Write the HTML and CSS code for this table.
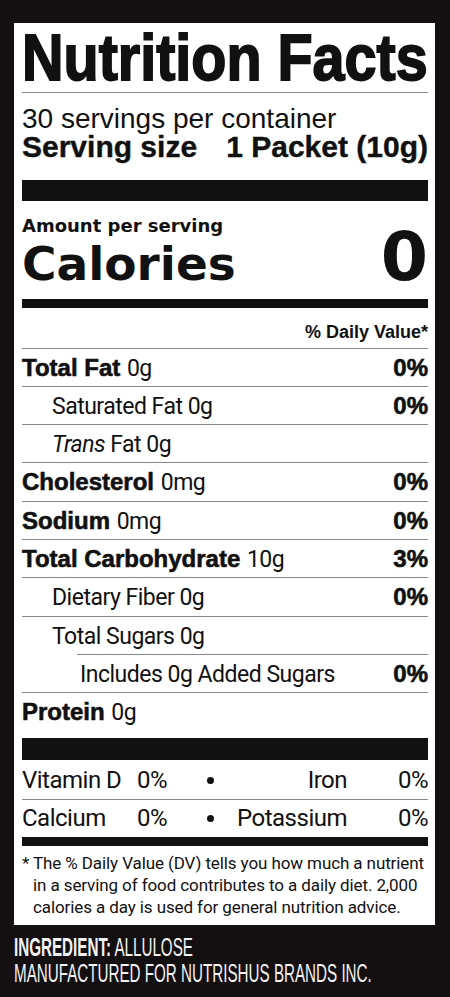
FILE: index.html
```html
<!DOCTYPE html>
<html lang="en">
<head>
  <meta charset="UTF-8">
  <meta name="viewport" content="width=device-width, initial-scale=1.0">
  <link rel="stylesheet" href="styles.css">
  <title>Nutrition Facts</title>
</head>
<body>
  <div class="label">
    <h1 class="title"><span class="title-text">Nutrition Facts</span></h1>
    <p class="servings">30 servings per container</p>
    <p class="size"><span>Serving size</span><span>1 Packet (10g)</span></p>
    <div class="bar thick"></div>

    <p class="amount">Amount per serving</p>
    <div class="calories"><span>Calories</span><span class="cal-num">0</span></div>
    <div class="bar medium"></div>

    <p class="dv-head">% Daily Value*</p>

    <div class="row"><span class="name"><b>Total Fat</b> <span class="reg">0g</span></span><b>0%</b></div>
    <div class="row indent"><span class="name"><span class="reg">Saturated Fat 0g</span></span><b>0%</b></div>
    <div class="row indent"><span class="name"><span class="reg"><i>Trans</i> Fat 0g</span></span></div>
    <div class="row"><span class="name"><b>Cholesterol</b> <span class="reg">0mg</span></span><b>0%</b></div>
    <div class="row"><span class="name"><b>Sodium</b> <span class="reg">0mg</span></span><b>0%</b></div>
    <div class="row"><span class="name"><b>Total Carbohydrate</b> <span class="reg">10g</span></span><b>3%</b></div>
    <div class="row indent"><span class="name"><span class="reg">Dietary Fiber 0g</span></span><b>0%</b></div>
    <div class="row indent"><span class="name"><span class="reg">Total Sugars 0g</span></span></div>
    <div class="row added"><span class="name"><span class="reg">Includes 0g Added Sugars</span></span><b>0%</b></div>
    <div class="row protein"><span class="name"><b>Protein</b> <span class="reg">0g</span></span></div>
    <div class="bar big"></div>

    <div class="vit-row first">
      <span>Vitamin D</span><span>0%</span><span class="dot"></span><span class="right">Iron</span><span class="right">0%</span>
    </div>
    <div class="vit-row">
      <span>Calcium</span><span>0%</span><span class="dot"></span><span class="right">Potassium</span><span class="right">0%</span>
    </div>
    <div class="bar medium"></div>

    <p class="note">* The % Daily Value (DV) tells you how much a nutrient<br>in a serving of food contributes to a daily diet. 2,000<br>calories a day is used for general nutrition advice.</p>
  </div>

  <div class="footer">
    <div class="footer-text">
      <p><b>INGREDIENT:</b> ALLULOSE</p>
      <p>MANUFACTURED FOR NUTRISHUS BRANDS INC.</p>
    </div>
  </div>
</body>
</html>
```

FILE: styles.css
```css
body {
  margin: 0;
  background-color: #141011;
  font-family: "Liberation Sans", Arial, sans-serif;
  color: #111;
}

.label {
  background-color: #fff;
  margin: 23px 15px 0 14px;
  padding: 0 7px 7px 8px;
}

/* title is drawn narrow by using a small font and stretching it up */
.title {
  margin: 0;
  padding: 4.75px 0 12.25px;
  border-bottom: 1px solid #888;
  font-weight: bold;
}

.title-text {
  display: block;
  font-size: 57.5px;
  line-height: 52px;
  white-space: nowrap;
  transform: scaleY(1.12);
  transform-origin: left top;
  -webkit-text-stroke: 1.6px #111;
}

.servings {
  margin: 0;
  padding-top: 12px;
  font-size: 28px;
  line-height: 28px;
}

.size {
  margin: 0;
  display: flex;
  justify-content: space-between;
  font-size: 30px;
  line-height: 28px;
  font-weight: bold;
  -webkit-text-stroke: 0.4px #111;
}

.bar {
  background-color: #111;
}

.bar.thick {
  margin-top: 19px;
  height: 21px;
}

.bar.medium {
  height: 9px;
}

.bar.big {
  margin-top: 7.67px;
  height: 22px;
}

.amount {
  margin: 0;
  padding-top: 16px;
  font-family: "DejaVu Sans", sans-serif;
  font-weight: bold;
  font-size: 18px;
  line-height: 18px;
}

.calories {
  display: flex;
  justify-content: space-between;
  align-items: baseline;
  margin-top: -2.5px;
  margin-bottom: 11px;
  font-family: "DejaVu Sans", sans-serif;
  font-weight: bold;
  font-size: 47px;
  line-height: 48px;
}

.cal-num {
  font-size: 68px;
}

.dv-head {
  margin: 0;
  padding: 14px 0 6px;
  text-align: right;
  font-size: 18px;
  line-height: 20px;
  font-weight: bold;
}

.row {
  display: flex;
  justify-content: space-between;
  align-items: baseline;
  border-top: 1px solid #888;
  font-size: 24px;
  line-height: 37.33px;
  font-weight: bold;
  white-space: nowrap;
}

.row b {
  -webkit-text-stroke: 0.6px #111;
}

.reg {
  font-family: Roboto, sans-serif;
  font-weight: normal;
  font-size: 23px;
  letter-spacing: -0.5px;
  line-height: 1;
}

.row.indent .name {
  padding-left: 30px;
}

.row.added {
  margin-left: 55px;
}

.row.added .name {
  padding-left: 3px;
}

.vit-row {
  display: grid;
  grid-template-columns: 115px 58px 30px 122px 1fr;
  align-items: center;
  font-family: Roboto, sans-serif;
  font-size: 24px;
  letter-spacing: -0.5px;
  line-height: 37px;
}

.vit-row.first {
  padding-top: 2px;
  border-bottom: 1px solid #888;
}

.vit-row .right {
  justify-self: end;
}

.dot {
  justify-self: center;
  width: 7px;
  height: 7px;
  border-radius: 50%;
  background-color: #111;
}

.note {
  margin: 0;
  padding: 6px 0 0 11px;
  text-indent: -11px;
  font-family: Roboto, sans-serif;
  font-size: 17px;
  line-height: 22px;
  letter-spacing: -0.1px;
  white-space: nowrap;
}

/* footer lines: small font in layout, stretched up to the tall condensed look */
.footer {
  padding: 9.8px 0 32px 14px;
  color: #f2f2f2;
}

.footer-text {
  font-size: 15.2px;
  line-height: 14.86px;
  white-space: nowrap;
  transform: scaleY(1.75);
  transform-origin: left top;
}

.footer-text p {
  margin: 0;
}
```
